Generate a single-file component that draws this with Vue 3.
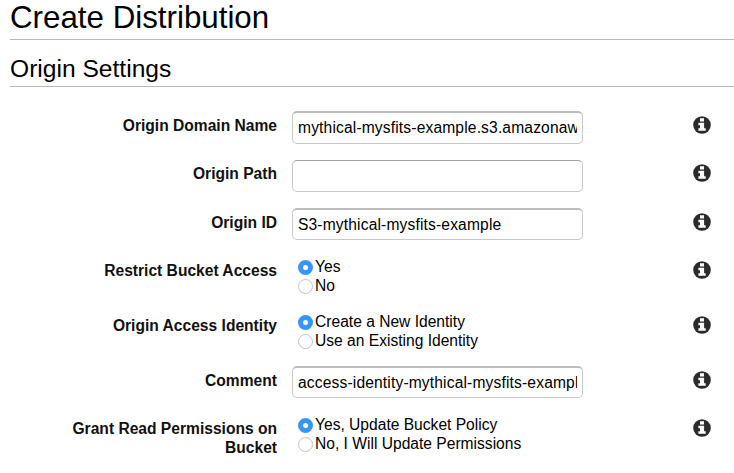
<script setup>
import { reactive } from 'vue'

const fields = reactive([
  { id: 'domain', label: 'Origin Domain Name', value: 'mythical-mysfits-example.s3.amazonaws.com' },
  { id: 'path', label: 'Origin Path', value: '' },
  { id: 'origin', label: 'Origin ID', value: 'S3-mythical-mysfits-example' },
  { id: 'restrict', label: 'Restrict Bucket Access', options: ['Yes', 'No'], value: 'Yes' },
  { id: 'identity', label: 'Origin Access Identity', options: ['Create a New Identity', 'Use an Existing Identity'], value: 'Create a New Identity' },
  { id: 'comment', label: 'Comment', value: 'access-identity-mythical-mysfits-example.s3.amazonaws.com' },
  { id: 'grant', label: 'Grant Read Permissions on Bucket', options: ['Yes, Update Bucket Policy', 'No, I Will Update Permissions'], value: 'Yes, Update Bucket Policy' },
])
</script>

<template>
  <main class="page">
    <h1 class="title">Create Distribution</h1>
    <h2 class="section">Origin Settings</h2>
    <form class="form">
      <div v-for="f in fields" :key="f.id" class="row">
        <label class="label" :for="f.id">{{ f.label }}</label>
        <div v-if="f.options" class="options">
          <label v-for="o in f.options" :key="o" class="option">
            <input v-model="f.value" class="radio" type="radio" :name="f.id" :value="o" />
            <span>{{ o }}</span>
          </label>
        </div>
        <input v-else :id="f.id" v-model="f.value" class="text" :class="f.id" type="text" spellcheck="false" />
        <svg class="info" viewBox="0 0 18 18">
          <circle cx="9" cy="9" r="8.8" fill="#2b2b2b" />
          <path d="M7 2.2h4v3.2H7zM5.4 6.7h5.7v5.5h1.6v2.6H5.4v-2.6H7V9.2H5.4z" fill="#fff" />
        </svg>
      </div>
    </form>
  </main>
</template>

<style>
body {
  background: #fff;
  overflow: hidden;
}
</style>

<style scoped>
.page {
  box-sizing: border-box;
  height: 473px;
  padding-left: 10px;
  overflow: hidden;
  color: #000;
  font-family: "Liberation Sans", Arial, sans-serif;
  font-size: 15.6px;
}
.title,
.section {
  box-sizing: border-box;
  margin: 0;
  border-bottom: 1px solid #b5b9b9;
  font-weight: 400;
  white-space: nowrap;
}
.title {
  height: 40px;
  font-size: 31.3px;
  line-height: 35px;
}
.section {
  height: 47px;
  padding-top: 13px;
  font-size: 24.6px;
  line-height: 31px;
}
.form {
  display: grid;
  grid-template-rows: 48px 49px 48px 55px 55px 48px 58px;
  padding-top: 24px;
}
.row {
  display: grid;
  grid-template-columns: 267px 291px 18px;
  column-gap: 15px;
  align-items: start;
}
.label {
  justify-self: end;
  width: 215px;
  padding-top: 5px;
  color: #111;
  font-weight: 700;
  line-height: 19px;
  text-align: right;
}
.text {
  box-sizing: border-box;
  width: 291px;
  height: 32px;
  margin: 0;
  padding: 0 5px;
  border: 1px solid #c8c8c8;
  border-top: 2px solid #bdbdbd;
  border-radius: 5px;
  outline: 0;
  background: #fff;
  color: #000;
  font: inherit;
  letter-spacing: 0.15px;
}
.domain {
  height: 33px;
}
.path {
  margin-top: 1px;
  border-top: 1px solid #a2a2a2;
}
.options {
  padding: 1px 0 0 6px;
}
.option {
  display: flex;
  align-items: center;
  gap: 2px;
  height: 19px;
  line-height: 19px;
  white-space: nowrap;
}
.radio {
  flex: none;
  box-sizing: border-box;
  width: 15px;
  height: 15px;
  margin: 2px 0 0;
  appearance: none;
  border: 1px solid #c3c3c3;
  border-radius: 50%;
  background: #fff;
}
.radio:checked {
  border: 5px solid #3596fb;
}
.info {
  display: block;
  width: 18px;
  height: 18px;
  margin: 5px 0 0 95px;
}
</style>
